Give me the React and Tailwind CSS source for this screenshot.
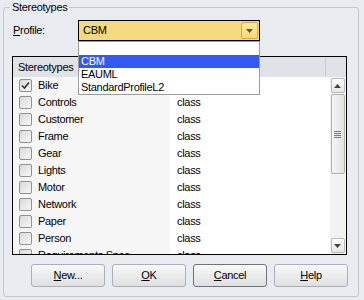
import React from "react";

const rows = ["Bike", "Controls", "Customer", "Frame", "Gear", "Lights", "Motor", "Network", "Paper", "Person", "Requirements Spec"];

export default function App() {
  return (
    <div className="w-[364px] h-[300px] bg-[#e8ebf0] pt-[7px] pl-[3px] text-[11px] text-black overflow-hidden" style={{ fontFamily: '"Liberation Sans", Arial, sans-serif' }}>
      <div className="relative w-[356px] h-[290px] border border-[#c3c6cc] rounded-[3px]">
        {/* legend */}
        <div className="absolute left-[6px] -top-[7px] px-[2px] bg-[#e8ebf0] leading-[13px] tracking-[-0.3px]">Stereotypes</div>

        {/* profile row */}
        <div className="mt-[12px] flex items-center h-[21px] pl-[9px]">
          <div className="w-[65px] tracking-[-0.3px]"><span className="underline">P</span>rofile:</div>
          <div className="w-[182px] h-[21px] border border-black bg-[#f5d97f] flex items-center">
            <div className="flex-1 pl-[4px] tracking-[-0.3px]">CBM</div>
            <div className="w-[17px] h-[17px] mr-[1px] rounded-[2px] border border-[#dfa64a] bg-gradient-to-b from-[#ffeaa0] to-[#fbd978] flex items-center justify-center">
              <svg width="7" height="4" viewBox="0 0 7 4"><path d="M0 0h7L3.5 4z" fill="#555" /></svg>
            </div>
          </div>
        </div>

        {/* list view */}
        <div className="mt-[15px] ml-[8px] w-[335px] h-[199px] border border-black bg-white flex flex-col">
          <div className="h-[20px] flex bg-[#dfe2e7] shrink-0">
            <div className="w-[157px] pl-[5px] flex items-center border-r border-[#c9ccd1] tracking-[-0.3px]">Stereotypes</div>
            <div className="w-[156px] pl-[6px] flex items-center border-r border-[#c9ccd1] tracking-[-0.3px]">Type</div>
            <div className="flex-1" />
          </div>
          <div className="flex flex-1 min-h-0">
            <div className="flex-1 overflow-hidden">
              {rows.map((r, i) => (
                <div key={r} className="h-[17px] flex shrink-0">
                  <div className="w-[157px] bg-[#f6f6f6] flex items-center pl-[6px]">
                    <div className="w-[13px] h-[13px] border border-[#8e9092] rounded-[2px] bg-gradient-to-br from-[#d9d9d9] to-[#f8f8f8] flex items-center justify-center shrink-0">
                      {i === 0 && (
                        <svg width="9" height="9" viewBox="0 0 9 9"><path d="M1 4.5l2.5 2.5L8 1.5" stroke="#333" strokeWidth="1.6" fill="none" /></svg>
                      )}
                    </div>
                    <span className="ml-[6px] tracking-[-0.3px] whitespace-nowrap">{r}</span>
                  </div>
                  <div className="pl-[7px] flex items-center tracking-[-0.3px]">class</div>
                </div>
              ))}
            </div>
            {/* scrollbar */}
            <div className="w-[16px] bg-[#f2f2f2] flex flex-col py-[1px] pr-[1px] items-center shrink-0">
              <div className="w-[14px] h-[15px] border border-[#b8b8b8] rounded-[2px] bg-gradient-to-b from-[#fdfdfd] to-[#e6e6e6] flex items-center justify-center">
                <svg width="7" height="4" viewBox="0 0 7 4"><path d="M0 4h7L3.5 0z" fill="#444" /></svg>
              </div>
              <div className="w-[14px] h-[80px] mt-[1px] border border-[#b0b0b0] rounded-[2px] bg-gradient-to-r from-[#f5f5f5] to-[#e2e2e2] flex flex-col items-center justify-center gap-[1px]">
                <div className="w-[7px] h-[1px] bg-[#777]" />
                <div className="w-[7px] h-[1px] bg-[#777]" />
                <div className="w-[7px] h-[1px] bg-[#777]" />
                <div className="w-[7px] h-[1px] bg-[#777]" />
              </div>
              <div className="flex-1" />
              <div className="w-[14px] h-[15px] border border-[#b8b8b8] rounded-[2px] bg-gradient-to-b from-[#fdfdfd] to-[#e6e6e6] flex items-center justify-center">
                <svg width="7" height="4" viewBox="0 0 7 4"><path d="M0 0h7L3.5 4z" fill="#444" /></svg>
              </div>
            </div>
          </div>
        </div>

        {/* buttons */}
        <div className="mt-[9px] ml-[27px] flex gap-[7px]">
          {[["N", "ew..."], ["O", "K"], ["C", "ancel"], ["H", "elp"]].map(([a, b]) => (
            <div key={a} className={`w-[74px] h-[23px] rounded-[3px] border ${a === "C" ? "border-[#6f7378]" : "border-[#abafb5]"} bg-gradient-to-b from-[#f8f8f8] to-[#dedfe1] flex items-center justify-center tracking-[-0.3px]`}>
              <span><span className="underline">{a}</span>{b}</span>
            </div>
          ))}
        </div>

        {/* open dropdown list */}
        <div className="absolute left-[74px] top-[33px] w-[182px] border border-[#9c9c9c] bg-white">
          <div className="h-[13px]" />
          <div className="h-[13px] bg-[#3359f5] text-white pl-[2px] leading-[13px] tracking-[-0.3px]">CBM</div>
          <div className="h-[13px] pl-[2px] leading-[13px] tracking-[-0.3px]">EAUML</div>
          <div className="h-[13px] pl-[2px] leading-[13px] tracking-[-0.3px]">StandardProfileL2</div>
        </div>
      </div>
    </div>
  );
}
